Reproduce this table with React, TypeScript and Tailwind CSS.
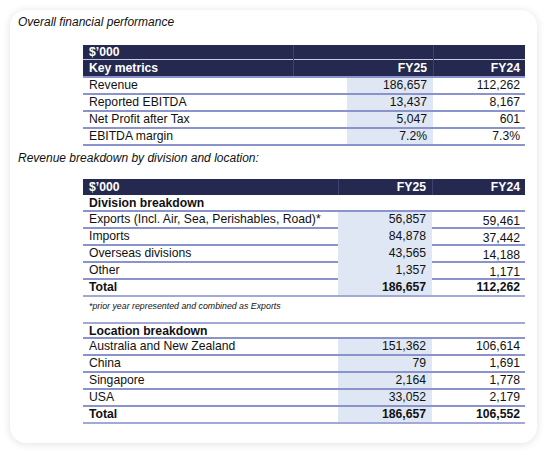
const NAVY = 'bg-[#25284f]';

type Row = { label: string; a: string; b: string; bold?: boolean; shift?: boolean };

const metrics: Row[] = [
  { label: 'Revenue', a: '186,657', b: '112,262' },
  { label: 'Reported EBITDA', a: '13,437', b: '8,167' },
  { label: 'Net Profit after Tax', a: '5,047', b: '601' },
  { label: 'EBITDA margin', a: '7.2%', b: '7.3%' },
];

const divisions: Row[] = [
  { label: 'Exports (Incl. Air, Sea, Perishables, Road)*', a: '56,857', b: '59,461', shift: true },
  { label: 'Imports', a: '84,878', b: '37,442', shift: true },
  { label: 'Overseas divisions', a: '43,565', b: '14,188', shift: true },
  { label: 'Other', a: '1,357', b: '1,171', shift: true },
  { label: 'Total', a: '186,657', b: '112,262', bold: true },
];

const locations: Row[] = [
  { label: 'Australia and New Zealand', a: '151,362', b: '106,614' },
  { label: 'China', a: '79', b: '1,691' },
  { label: 'Singapore', a: '2,164', b: '1,778' },
  { label: 'USA', a: '33,052', b: '2,179' },
  { label: 'Total', a: '186,657', b: '106,552', bold: true },
];

function MetricsTable() {
  return (
    <div className="ml-[65px] w-[442px] text-[12.2px]">
      <div className={`${NAVY} grid h-[15px] grid-cols-[210px_54px_86px_92px] border-b border-[#c9cde4] font-bold text-white`}>
        <div className="pl-[6px] leading-[15px]">$’000</div>
        <div className="border-l border-[#3d4272]" />
        <div />
        <div className="border-l border-[#3d4272]" />
      </div>
      <div className={`${NAVY} grid h-[18px] grid-cols-[210px_54px_86px_92px] border-b-2 border-[#8a93cc] font-bold text-white`}>
        <div className="pl-[6px] leading-[16px]">Key metrics</div>
        <div className="border-l border-[#3d4272]" />
        <div className="pr-[6px] text-right leading-[16px]">FY25</div>
        <div className="border-l border-[#3d4272] pr-[5px] text-right leading-[16px]">FY24</div>
      </div>
      {metrics.map((r) => (
        <div key={r.label} className="grid h-[17px] grid-cols-[264px_86px_92px] border-b-2 border-[#8a93cc]">
          <div className="pl-[6px] leading-[15px]">{r.label}</div>
          <div className="bg-[#dfe7f4] pr-[6px] text-right leading-[15px]">{r.a}</div>
          <div className="pr-[5px] text-right leading-[15px]">{r.b}</div>
        </div>
      ))}
    </div>
  );
}

function DataRows({ rows }: { rows: Row[] }) {
  return (
    <>
      {rows.map((r) => (
        <div
          key={r.label}
          className={`grid h-[17px] grid-cols-[255px_94px_93px] border-b-2 ${r.bold ? 'border-[#a3a9d6] font-bold' : 'border-[#8a93cc]'}`}
        >
          <div className="pl-[6px] leading-[15px]">{r.label}</div>
          <div className="bg-[#dfe7f4] pr-[6px] text-right leading-[15px]">{r.a}</div>
          <div className={`pr-[5px] text-right leading-[15px] ${r.shift ? 'pt-[2px]' : ''}`}>{r.b}</div>
        </div>
      ))}
    </>
  );
}

function BreakdownTable() {
  return (
    <div className="ml-[65px] w-[442px] text-[12.2px]">
      <div className={`${NAVY} grid h-[16px] grid-cols-[255px_94px_93px] font-bold text-white`}>
        <div className="pl-[6px] leading-[16px]">$’000</div>
        <div className="border-l border-[#3d4272] pr-[6px] text-right leading-[16px]">FY25</div>
        <div className="border-l border-[#3d4272] pr-[5px] text-right leading-[16px]">FY24</div>
      </div>
      <div className="h-[17px] border-b-2 border-[#8a93cc] pl-[6px] font-bold leading-[16px]">Division breakdown</div>
      <DataRows rows={divisions} />
      <p className="h-[25px] pl-[6px] pt-[3px] text-[8.8px] italic leading-[12px]">
        *prior year represented and combined as Exports
      </p>
      <div className="h-[17px] border-t-2 border-b-2 border-t-[#a3a9d6] border-b-[#8a93cc] pl-[6px] font-bold leading-[15px]">
        Location breakdown
      </div>
      <DataRows rows={locations} />
    </div>
  );
}

export default function App() {
  return (
    <div className="h-[455px] w-[550px] bg-white p-[10px] font-['Liberation_Sans',Arial,sans-serif] text-[#111]">
      <div className="h-[433px] w-[527px] rounded-[16px] bg-white pt-[4px] pl-[8px] shadow-[0_1px_8px_rgba(0,0,0,0.12)]">
        <h2 className="text-[12px] italic leading-[16px]">Overall financial performance</h2>
        <div className="mt-[15px]">
          <MetricsTable />
        </div>
        <h2 className="mt-[4px] text-[12px] italic leading-[16px]">Revenue breakdown by division and location:</h2>
        <div className="mt-[13px]">
          <BreakdownTable />
        </div>
      </div>
    </div>
  );
}
